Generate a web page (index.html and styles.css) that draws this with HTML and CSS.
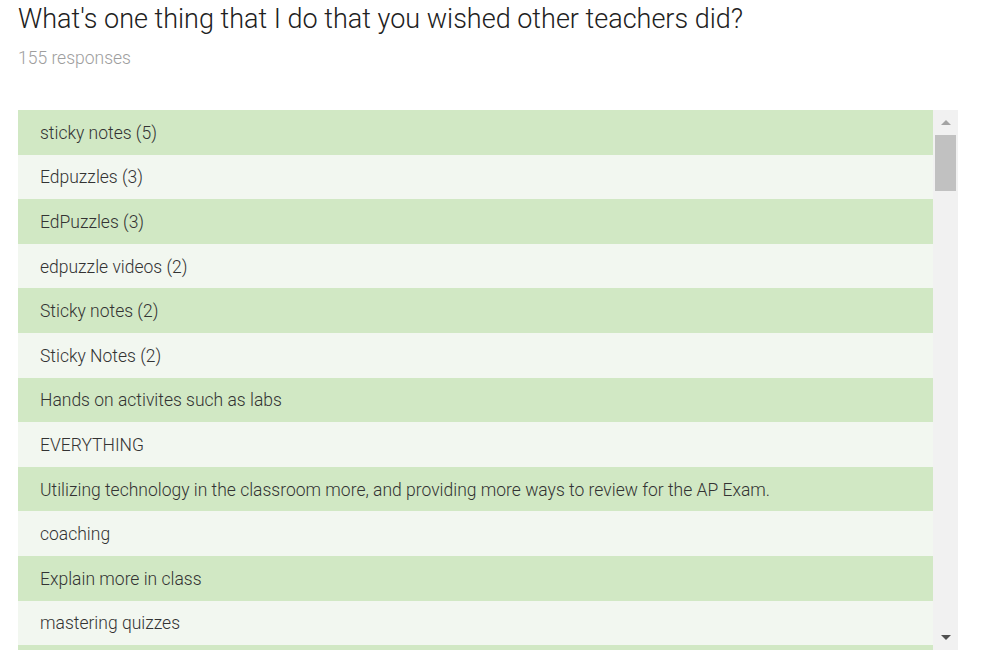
FILE: index.html
```html
<!DOCTYPE html>
<html>
<head>
<meta charset="utf-8">
<link rel="stylesheet" href="styles.css">
</head>
<body>
<div class="page">
  <h1 class="title">What's one thing that I do that you wished other teachers did?</h1>
  <div class="count">155 responses</div>
  <div class="panel">
    <div class="list">
      <div class="row">sticky notes (5)</div>
      <div class="row">Edpuzzles (3)</div>
      <div class="row">EdPuzzles (3)</div>
      <div class="row">edpuzzle videos (2)</div>
      <div class="row">Sticky notes (2)</div>
      <div class="row">Sticky Notes (2)</div>
      <div class="row">Hands on activites such as labs</div>
      <div class="row">EVERYTHING</div>
      <div class="row">Utilizing technology in the classroom more, and providing more ways to review for the AP Exam.</div>
      <div class="row">coaching</div>
      <div class="row">Explain more in class</div>
      <div class="row">mastering quizzes</div>
      <div class="row row-peek"></div>
    </div>
    <div class="scrollbar">
      <div class="arrow up"></div>
      <div class="track"><div class="thumb"></div></div>
      <div class="arrow down"></div>
    </div>
  </div>
</div>
</body>
</html>
```
FILE: styles.css
```css
html, body {
  margin: 0;
  padding: 0;
  background: #ffffff;
}
.page {
  padding: 0 24px 0 18px;
  font-family: Roboto, "Liberation Sans", sans-serif;
}
.title {
  margin: 0;
  padding-top: 1px;
  font-size: 27px;
  font-weight: 300;
  line-height: 36px;
  color: #212121;
}
.count {
  margin-top: 9px;
  font-size: 17.5px;
  font-weight: 300;
  line-height: 24px;
  color: #9e9e9e;
}
.panel {
  margin-top: 40px;
  display: flex;
  height: 540px;
  width: 940px;
}
.list {
  flex: 1;
  overflow: hidden;
}
.row {
  height: 44.6px;
  display: flex;
  align-items: center;
  padding-left: 22px;
  padding-top: 1px;
  box-sizing: border-box;
  font-size: 17.5px;
  font-weight: 300;
  color: #333333;
  background: #f2f7f0;
  white-space: nowrap;
}
.row:nth-child(odd) {
  background: #d1e8c4;
}
.row-peek {
  height: 5px;
  padding-top: 0;
}
.scrollbar {
  width: 25px;
  background: #f1f1f1;
  display: flex;
  flex-direction: column;
  align-items: center;
}
.arrow {
  width: 0;
  height: 0;
  border-left: 5px solid transparent;
  border-right: 5px solid transparent;
}
.arrow.up {
  margin-top: 10px;
  border-bottom: 5px solid #a3a3a3;
}
.arrow.down {
  margin-bottom: 10px;
  border-top: 5px solid #505050;
}
.track {
  flex: 1;
  width: 100%;
  padding-top: 10px;
  box-sizing: border-box;
  display: flex;
  justify-content: center;
}
.thumb {
  width: 21px;
  height: 56px;
  background: #c1c1c1;
}
```
